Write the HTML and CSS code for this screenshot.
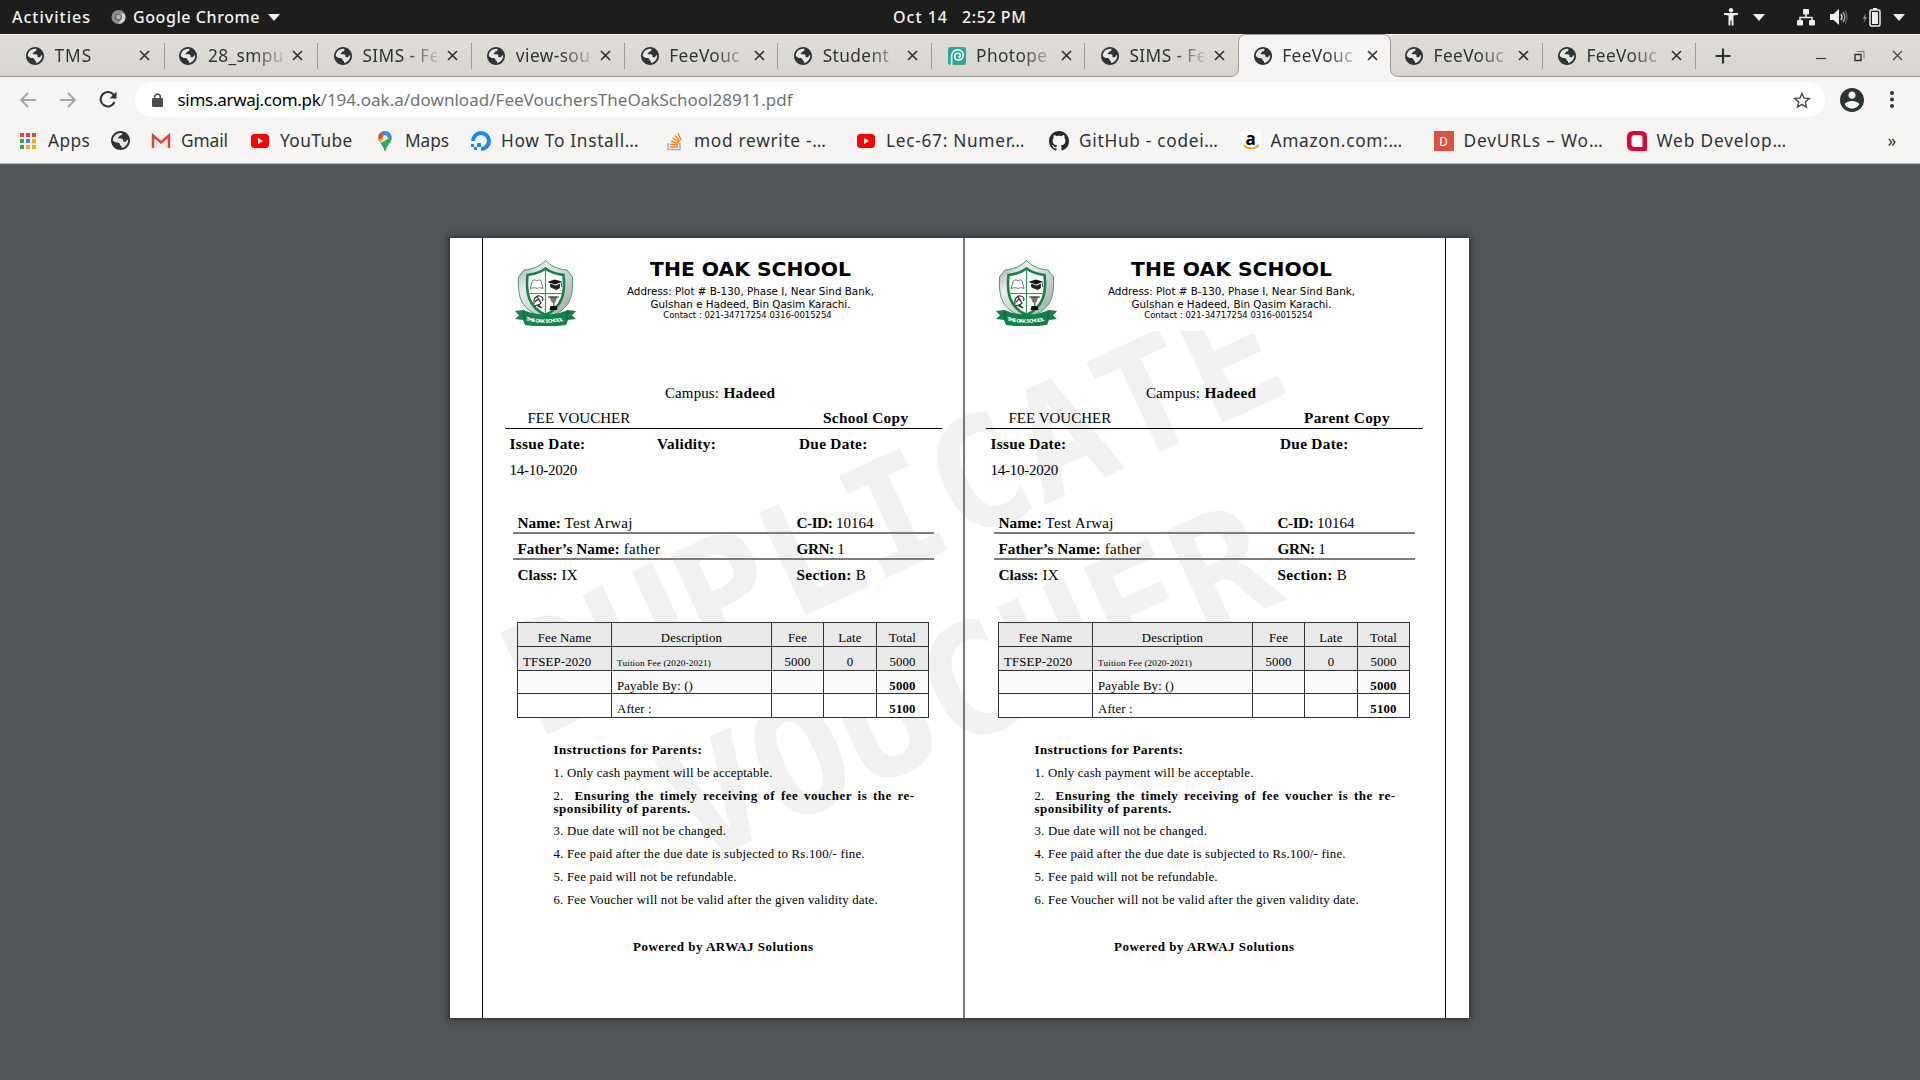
FILE: index.html
```html
<!DOCTYPE html>
<html lang="en">
<head>
<meta charset="utf-8">
<title>FeeVouchersTheOakSchool28911.pdf</title>
<link rel="stylesheet" href="styles.css">
</head>
<body>
<svg class="defs" width="0" height="0">
  <defs>
    <linearGradient id="silver" x1="0" y1="0" x2="1" y2="1">
      <stop offset="0" stop-color="#9da1a0"/><stop offset=".3" stop-color="#ececec"/><stop offset=".6" stop-color="#cdcfcf"/><stop offset="1" stop-color="#9da1a0"/>
    </linearGradient>
  </defs>
  <symbol id="globe" viewBox="2 2 20 20"><path fill="#2e3436" d="M12 2C6.48 2 2 6.480 2 12s4.480 10 10 10 10-4.480 10-10S17.520 2 12 2z"/><path fill="#e9e6e3" d="M13.500 4.100c.4 1.600-.3 2.400-1.700 2.700-.9.200-.7 1.200-1.500 1.500-.8.300-1 .9-.6 1.700h3.200c1.200 0 1.900.8 1.900 1.900v1.500h1.600c1.300-.1 2-.8 2.200-2l1.400-.2c.2 4.200-2.600 7.900-6.900 8.600.4-1.500-.4-1.900-1.100-2.400-.9-.6-.5-1.900-1.500-2.600-1-.7-2.200-.6-3.700-.7L4 12.500C3.600 7.700 7.900 3.300 13.500 4.100z"/><path fill="#2e3436" d="M3 11.500l4.200 3 3 .2c1 .3.700 1.400 1.300 2.100.7.700 1.500.8 1.300 2.200l-.4 2-4-.7-4-3.500z" opacity=".85"/></symbol>
  <symbol id="x" viewBox="0 0 11 11"><path d="M1 1l9 9M10 1l-9 9" stroke="#2e3436" stroke-width="1.700" fill="none"/></symbol>
  <symbol id="tri" viewBox="0 0 12 7"><path d="M0 0h12L6 7z" fill="#f0f0f0"/></symbol>
  <symbol id="youtube" viewBox="0 0 20 20"><rect x="1" y="3" width="18" height="14" rx="3.500" fill="#f00"/><path d="M8 7l5 3-5 3z" fill="#fff"/></symbol>
  <symbol id="crest" viewBox="0 0 61 66">
    <path d="M30.500.5c5 5 12 9 21.500 9.500l5.500 7c1 22-3 33-27 41.500C6.500 50 2.500 39 3.500 17L9 10C18.500 9.500 25.500 5.500 30.500.5z" fill="url(#silver)" stroke="#3d9b6d" stroke-width="1"/>
    <path d="M30.500 8.500c4.500 3.500 10 5.500 18 6.500 2 18-1 32-18 40-17-8-20-22-18-40 8-1 13.500-3 18-6.500z" fill="#fff" stroke="#14834a" stroke-width="2.600"/>
    <path d="M30.500 9v46M12.500 33.500h36" stroke="#2d9a62" stroke-width="1.200"/>
    <path d="M15 28.500l2.500-8c2-1 3.500-.5 4.500.5 1-1 2.500-1.500 4-.5l2 8c-2.500-1-4.500-1-6 0-1.500-1-4.500-1-7 0z" fill="#fff" stroke="#777" stroke-width="1"/>
    <path d="M32.500 22l7-2.500 7.500 2-6.500 3z" fill="#111"/><path d="M35.500 24l5.500 2 3.500-2v4l-3 1.500-6-2.500zM46 22l.7 5" fill="#222" stroke="#222" stroke-width=".8"/>
    <path d="M19 44c-1-5 2-8.500 5.500-8 3 .6 4 2.500 3 5M20 42l3-3 3 4-3 3 4 2-4-3-4 1M22 37l3 4" fill="none" stroke="#333" stroke-width="1.200"/>
    <path d="M34.500 36.500h8l-2 5.500-2 1.500-2-1.500zM38 43h1.500v3H38z" fill="#777"/><path d="M35.500 46h6l1 4-8-.1z" fill="#111"/><path d="M33 37h11" stroke="#333" stroke-width="1"/>
    <path d="M0 51l8-1c14 6 31 6 45 0l8 1-4 4.500 4 3.500-8 1-2 5c-14 2-28 2-41 0l-2-5-8-1 4-3.500z" fill="#14804a"/>
    <path d="M9 50.500v8.500M52 50.500v8.500" stroke="#0a5a32" stroke-width="1"/>
    <path id="ribbonCurve" d="M11 60.500q19.500 4.500 39 0" fill="none"/>
    <text class="ribbon-text"><textPath href="#ribbonCurve" textLength="38">THE OAK SCHOOL</textPath></text>
  </symbol>
</svg>

<header class="topbar">
  <span class="activities">Activities</span>
  <svg class="chrome-icon" viewBox="0 0 16 16"><circle cx="8" cy="8" r="7.500" fill="#8c8c8c"/><path d="M8 .5A7.500 7.500 0 0 1 15.500 8 7.500 7.500 0 0 1 8 15.500L11.500 8 8 4.500h6.500A7.500 7.500 0 0 0 8 .5z" fill="#d0d0d0"/><circle cx="8" cy="8" r="3.600" fill="#555"/><circle cx="8" cy="8" r="2.600" fill="#b5b5b5"/></svg>
  <span class="app-name">Google Chrome</span>
  <svg class="tri" width="12" height="7"><use href="#tri"/></svg>
  <span class="date">Oct 14</span>
  <span class="time">2:52 PM</span>
  <svg class="person" width="14" height="18" viewBox="0 0 14 18" fill="#eee"><circle cx="7" cy="2.200" r="2.200"/><path d="M0 5h14v1.800l-4.500.7v10H7.600v-5H6.400v5H4.500v-10L0 6.800z"/></svg>
  <svg class="tri" width="12" height="7"><use href="#tri"/></svg>
  <svg class="net" width="18" height="17" viewBox="0 0 18 17" fill="#eee"><rect x="6" y="0" width="6" height="5.500" rx="1"/><rect x="0" y="11" width="6" height="5.500" rx="1"/><rect x="12" y="11" width="6" height="5.500" rx="1"/><path d="M9 5v4M3 11V8.500h12V11" fill="none" stroke="#eee" stroke-width="1.500"/></svg>
  <svg class="vol" width="18" height="16" viewBox="0 0 18 16"><path d="M0 5h3.500L9 0v16l-5.500-5H0z" fill="#eee"/><path d="M11 5q2 3 0 6" fill="none" stroke="#ccc" stroke-width="1.500"/><path d="M13 3q3.500 5 0 10" fill="none" stroke="#999" stroke-width="1.500"/><path d="M15.200 1.500q3.500 6.500 0 13" fill="none" stroke="#666" stroke-width="1.200"/></svg>
  <svg class="bat" width="19" height="19" viewBox="0 0 19 19"><path d="M4 5L.8 10.500h2L1.500 15 5 9H3z" fill="#999"/><rect x="8" y="2" width="10" height="16" rx="1.500" fill="none" stroke="#eee" stroke-width="1.500"/><rect x="10" y="4" width="6" height="12" fill="#eee"/><rect x="11" y="0" width="4" height="2" fill="#eee"/></svg>
  <svg class="tri" width="12" height="7"><use href="#tri"/></svg>
</header>

<nav class="tabstrip">
  <div class="tab"><svg class="fav"><use href="#globe"/></svg><span class="label wide">TMS</span><svg class="close"><use href="#x"/></svg></div>
  <div class="tab"><svg class="fav"><use href="#globe"/></svg><span class="label">28_smpu</span><svg class="close"><use href="#x"/></svg></div>
  <div class="tab"><svg class="fav"><use href="#globe"/></svg><span class="label">SIMS - Fe</span><svg class="close"><use href="#x"/></svg></div>
  <div class="tab"><svg class="fav"><use href="#globe"/></svg><span class="label">view-sou</span><svg class="close"><use href="#x"/></svg></div>
  <div class="tab"><svg class="fav"><use href="#globe"/></svg><span class="label">FeeVouc</span><svg class="close"><use href="#x"/></svg></div>
  <div class="tab"><svg class="fav"><use href="#globe"/></svg><span class="label">Student</span><svg class="close"><use href="#x"/></svg></div>
  <div class="tab"><svg class="fav" viewBox="0 0 20 20"><rect width="20" height="20" rx="3" fill="#2ba79a"/><path d="M4 20v-9.500C4 6 7 3 10.800 3S17 6 17 9s-2.500 5.500-5.500 5.500S7.500 12.500 7.500 10.500 9 7 11 7s2.700 1.300 2.700 2.500-1 2-2.200 2" fill="none" stroke="#fff" stroke-width="1.700"/></svg><span class="label">Photope</span><svg class="close"><use href="#x"/></svg></div>
  <div class="tab no-sep"><svg class="fav"><use href="#globe"/></svg><span class="label">SIMS - Fe</span><svg class="close"><use href="#x"/></svg></div>
  <div class="tab active">
    <svg class="shape" viewBox="0 0 172 43"><path d="M0 43v-.5C7 42.500 9.500 40 9.500 33V9.500C9.500 3 12 .5 18 .5h135c6 0 8.500 2.500 8.500 9V33c0 7 2.500 9.500 10 9.500v.5z" fill="#f6f5f4"/><path d="M0 42.500C7 42.500 9.500 40 9.500 33V9.500C9.500 3 12 .5 18 .5h135c6 0 8.500 2.500 8.500 9V33c0 7 2.500 9.500 10 9.500" fill="none" stroke="#9a9996"/></svg>
    <svg class="fav"><use href="#globe"/></svg><span class="label">FeeVouc</span><svg class="close"><use href="#x"/></svg></div>
  <div class="tab"><svg class="fav"><use href="#globe"/></svg><span class="label">FeeVouc</span><svg class="close"><use href="#x"/></svg></div>
  <div class="tab"><svg class="fav"><use href="#globe"/></svg><span class="label">FeeVouc</span><svg class="close"><use href="#x"/></svg></div>
  <svg class="plus" width="16" height="16" viewBox="0 0 16 16"><path d="M8 .5v15M.5 8h15" stroke="#2e3436" stroke-width="2.200"/></svg>
  <svg class="win-min" width="10" height="12" viewBox="0 0 10 12"><path d="M0 8.500h10" stroke="#444" stroke-width="1.300"/></svg>
  <svg class="win-max" width="11" height="12" viewBox="0 0 11 12"><path d="M1 4.500h6v6H1z" fill="none" stroke="#333" stroke-width="1.400"/><path d="M3 1.500h7v7" fill="none" stroke="#777"/></svg>
  <svg class="win-close" width="11" height="11" viewBox="0 0 11 11"><path d="M1 1l9 9M10 1l-9 9" stroke="#444" stroke-width="1.300"/></svg>
</nav>

<div class="toolbar">
  <svg class="nav-back" width="16" height="16" viewBox="0 0 16 16"><path d="M16 8H1.500M8 1L1 8l7 7" fill="none" stroke="#a3a5a4" stroke-width="1.800"/></svg>
  <svg class="nav-fwd" width="16" height="16" viewBox="0 0 16 16"><path d="M0 8h14.500M8 1l7 7-7 7" fill="none" stroke="#a3a5a4" stroke-width="1.800"/></svg>
  <svg class="nav-reload" width="18" height="18" viewBox="0 0 18 18"><path d="M14.800 4.200A7.200 7.200 0 1 0 15.500 11" fill="none" stroke="#2e3436" stroke-width="2.100"/><path d="M17.500.5v7h-7z" fill="#2e3436"/></svg>
  <div class="omnibox">
    <svg width="11" height="14" viewBox="0 0 11 14"><rect y="5" width="11" height="9" rx="1.200" fill="#4a4d4f"/><path d="M2.700 6V3.700a2.800 2.800 0 0 1 5.600 0V6" fill="none" stroke="#4a4d4f" stroke-width="1.500"/></svg>
    <span class="url"><span class="host">sims.arwaj.com.pk</span><span class="path">/194.oak.a/download/FeeVouchersTheOakSchool28911.pdf</span></span>
    <svg class="star" width="18" height="18" viewBox="2 2 20 19"><path fill="#4a4d4f" d="M22 9.240l-7.190-.62L12 2 9.190 8.630 2 9.240l5.460 4.730L5.820 21 12 17.270 18.180 21l-1.630-7.030L22 9.240zM12 15.400l-3.760 2.270 1-4.280-3.320-2.880 4.380-.38L12 6.100l1.710 4.040 4.380.38-3.320 2.880 1 4.280L12 15.400z"/></svg>
  </div>
  <svg class="avatar" width="24" height="24" viewBox="2 2 20 20"><path fill="#2e3436" d="M12 2C6.480 2 2 6.480 2 12s4.480 10 10 10 10-4.480 10-10S17.520 2 12 2zm0 3c1.660 0 3 1.340 3 3s-1.340 3-3 3-3-1.340-3-3 1.340-3 3-3zm0 14.200c-2.500 0-4.710-1.280-6-3.220.03-1.990 4-3.080 6-3.080 1.990 0 5.970 1.090 6 3.080-1.290 1.940-3.500 3.220-6 3.220z"/></svg>
  <svg class="menu" width="4" height="17" viewBox="0 0 4 17" fill="#2e3436"><circle cx="2" cy="2" r="2"/><circle cx="2" cy="8.500" r="2"/><circle cx="2" cy="15" r="2"/></svg>
</div>

<div class="bookmarks">
  <div class="bm mid"><svg viewBox="0 0 20 20"><g fill="#ea4335"><path d="M2 2h4v4H2zM8 2h4v4H8zM14 2h4v4h-4z"/></g><path d="M2 8h4v4H2zM2 14h4v4H2z" fill="#34a853"/><path d="M8 8h4v4H8z" fill="#4285f4"/><path d="M14 8h4v4h-4zM8 14h4v4H8zM14 14h4v4h-4z" fill="#fbab18"/></svg>Apps</div>
  <div class="bm"><svg class="small"><use href="#globe"/></svg></div>
  <div class="bm tight"><svg viewBox="0 0 20 20"><path d="M1 4h18v13H1z" fill="#eee"/><path d="M2 17V4.500l8 7 8-7V17" fill="none" stroke="#db4437" stroke-width="2.400"/><path d="M3 17l5-6M17 17l-5-6" stroke="#ccc" stroke-width=".8"/></svg>Gmail</div>
  <div class="bm mid"><svg><use href="#youtube"/></svg>YouTube</div>
  <div class="bm tight"><svg viewBox="0 0 20 20"><path d="M10 0C6 0 3.300 3 3.300 6.700c0 1.700.6 3 1.700 4.500L10 6z" fill="#ea4335"/><path d="M10 0c3.700 0 6.700 3 6.700 6.700L10 7 6 2z" fill="#4285f4"/><path d="M3.400 6c0 2 .6 3.500 2 5.300l6-6.500L8 4 5 2.500C4 3.500 3.400 5 3.400 6z" fill="#fbbc04"/><path d="M5 2.300L9 5 4.500 9C3 6 3.500 4 5 2.300z" fill="#ea4335"/><path d="M16.500 5.500c.6 3-.8 5.500-2.500 7.500-1.800 2.200-2.500 4-3 6-.2 1.200-1.500 1.200-1.800 0-.6-2.500-1.700-4.300-3.700-7L11 9z" fill="#34a853"/><circle cx="10" cy="6.700" r="2.400" fill="#fff"/></svg>Maps</div>
  <div class="bm"><svg viewBox="0 0 20 20"><path d="M2 10a8 8 0 1 1 8 8" fill="none" stroke="#1a86ff" stroke-width="4"/><path d="M6 12h4v4H6zM3 16h3v3H3zM0 13h3v3H0z" fill="#1a86ff"/></svg>How To Install…</div>
  <div class="bm"><svg viewBox="0 0 20 20"><path d="M4 12v6.500h12V12" fill="none" stroke="#aab0b4" stroke-width="1.500"/><path d="M6 16h8M6.200 13.200l7.800.9M7 10.200l7.400 2.300M8.700 7l6 4M11 4.500l4.500 5.800M14 2.500l3 6.800" stroke="#f48024" stroke-width="1.500"/></svg>mod rewrite -…</div>
  <div class="bm"><svg><use href="#youtube"/></svg>Lec-67: Numer…</div>
  <div class="bm"><svg viewBox="0 0 16 16"><path fill="#24292e" d="M8 0C3.580 0 0 3.580 0 8c0 3.540 2.290 6.530 5.470 7.590.4.070.55-.17.55-.38 0-.19-.01-.82-.01-1.490-2.010.37-2.530-.49-2.690-.94-.09-.23-.48-.94-.82-1.130-.28-.15-.68-.52-.01-.53.63-.01 1.080.58 1.230.82.72 1.210 1.870.87 2.330.66.070-.52.28-.87.51-1.070-1.780-.2-3.640-.89-3.640-3.950 0-.87.31-1.590.82-2.150-.08-.2-.36-1.020.08-2.120 0 0 .67-.21 2.200.82.64-.18 1.320-.27 2-.27s1.360.09 2 .27c1.530-1.040 2.200-.82 2.200-.82.44 1.100.16 1.920.08 2.120.51.56.82 1.270.82 2.150 0 3.070-1.870 3.750-3.650 3.950.29.25.54.73.54 1.480 0 1.070-.01 1.930-.01 2.200 0 .21.15.46.55.38A8.010 8.010 0 0 0 16 8c0-4.420-3.580-8-8-8z"/></svg>GitHub - codei…</div>
  <div class="bm"><svg viewBox="0 0 20 20"><rect width="20" height="20" rx="3" fill="#fff"/><text class="amazon-a" x="10" y="13.500" text-anchor="middle">a</text><path d="M3 15q7 4.500 13 .8" fill="none" stroke="#f90" stroke-width="1.700"/><path d="M14.500 14.500l3-.3-1 3" fill="none" stroke="#f90" stroke-width="1.100"/></svg>Amazon.com:…</div>
  <div class="bm loose"><svg viewBox="0 0 20 20"><rect width="20" height="20" fill="#de5044"/><text class="dev-d" x="10" y="14.700" text-anchor="middle">D</text></svg>DevURLs – Wo…</div>
  <div class="bm loose"><svg viewBox="0 0 20 20"><path d="M6 0h8q6 0 6 6v14H6q-6 0-6-6V6q0-6 6-6z" fill="#e4003a"/><path d="M7.500 4h5q3 0 3 3v9h-8q-3 0-3-3V7q0-3 3-3z" fill="#fff"/></svg>Web Develop…</div>
  <div class="bm more">»</div>
</div>

<main class="viewer">
  <div class="sheet">
    <svg class="watermark" viewBox="0 93 1019 687"><text transform="translate(88 501) rotate(-24.800)">DUPLICATE</text><text transform="translate(246 628) rotate(-24.300)">VOUCHER</text></svg>

    <section class="voucher">
      <div class="head">
        <svg class="crest"><use href="#crest"/></svg>
        <div class="school"><h1>THE OAK SCHOOL</h1><p>Address: Plot # B-130, Phase I, Near Sind Bank,</p><p>Gulshan e Hadeed, Bin Qasim Karachi.</p><p class="contact">Contact : 021-34717254 0316-0015254</p></div>
      </div>
      <p class="campus">Campus: <b>Hadeed</b></p>
      <div class="kind"><span>FEE VOUCHER</span><b>School Copy</b></div>
      <div class="dates"><b>Issue Date:</b><b>Validity:</b><b>Due Date:</b><span class="digits">14-10-2020</span></div>
      <div class="student">
        <div class="line"><span><b>Name:</b> Test Arwaj</span><span class="digits"><b class="id">C-ID:</b> 10164</span></div>
        <div class="line"><span><b>Father’s Name:</b> father</span><span class="digits"><b class="id">GRN:</b> 1</span></div>
        <div class="line"><span><b>Class:</b> IX</span><span><b class="sec">Section:</b> B</span></div>
      </div>
      <table class="fees">
        <colgroup><col class="c1"><col class="c2"><col class="c3"><col class="c4"><col class="c5"></colgroup>
        <tr class="shade"><td class="c">Fee Name</td><td class="c">Description</td><td class="c">Fee</td><td class="c">Late</td><td class="c">Total</td></tr>
        <tr class="shade"><td>TFSEP-2020</td><td class="tiny">Tuition Fee (2020-2021)</td><td class="c">5000</td><td class="c">0</td><td class="c">5000</td></tr>
        <tr class="faint"><td></td><td>Payable By: ()</td><td></td><td></td><td class="c"><b>5000</b></td></tr>
        <tr><td></td><td>After :</td><td></td><td></td><td class="c"><b>5100</b></td></tr>
      </table>
      <div class="notes">
        <p><b>Instructions for Parents:</b></p>
        <p>1. Only cash payment will be acceptable.</p>
        <p><span class="full">2.&nbsp; <b>Ensuring the timely receiving of fee voucher is the re-</b></span><b>sponsibility of parents.</b></p>
        <p>3. Due date will not be changed.</p>
        <p>4. Fee paid after the due date is subjected to Rs.100/- fine.</p>
        <p>5. Fee paid will not be refundable.</p>
        <p>6. Fee Voucher will not be valid after the given validity date.</p>
      </div>
      <p class="powered"><b>Powered by ARWAJ Solutions</b></p>
    </section>

    <section class="voucher second">
      <div class="head">
        <svg class="crest"><use href="#crest"/></svg>
        <div class="school"><h1>THE OAK SCHOOL</h1><p>Address: Plot # B-130, Phase I, Near Sind Bank,</p><p>Gulshan e Hadeed, Bin Qasim Karachi.</p><p class="contact">Contact : 021-34717254 0316-0015254</p></div>
      </div>
      <p class="campus">Campus: <b>Hadeed</b></p>
      <div class="kind"><span>FEE VOUCHER</span><b>Parent Copy</b></div>
      <div class="dates"><b>Issue Date:</b><b></b><b>Due Date:</b><span class="digits">14-10-2020</span></div>
      <div class="student">
        <div class="line"><span><b>Name:</b> Test Arwaj</span><span class="digits"><b class="id">C-ID:</b> 10164</span></div>
        <div class="line"><span><b>Father’s Name:</b> father</span><span class="digits"><b class="id">GRN:</b> 1</span></div>
        <div class="line"><span><b>Class:</b> IX</span><span><b class="sec">Section:</b> B</span></div>
      </div>
      <table class="fees">
        <colgroup><col class="c1"><col class="c2"><col class="c3"><col class="c4"><col class="c5"></colgroup>
        <tr class="shade"><td class="c">Fee Name</td><td class="c">Description</td><td class="c">Fee</td><td class="c">Late</td><td class="c">Total</td></tr>
        <tr class="shade"><td>TFSEP-2020</td><td class="tiny">Tuition Fee (2020-2021)</td><td class="c">5000</td><td class="c">0</td><td class="c">5000</td></tr>
        <tr class="faint"><td></td><td>Payable By: ()</td><td></td><td></td><td class="c"><b>5000</b></td></tr>
        <tr><td></td><td>After :</td><td></td><td></td><td class="c"><b>5100</b></td></tr>
      </table>
      <div class="notes">
        <p><b>Instructions for Parents:</b></p>
        <p>1. Only cash payment will be acceptable.</p>
        <p><span class="full">2.&nbsp; <b>Ensuring the timely receiving of fee voucher is the re-</b></span><b>sponsibility of parents.</b></p>
        <p>3. Due date will not be changed.</p>
        <p>4. Fee paid after the due date is subjected to Rs.100/- fine.</p>
        <p>5. Fee paid will not be refundable.</p>
        <p>6. Fee Voucher will not be valid after the given validity date.</p>
      </div>
      <p class="powered"><b>Powered by ARWAJ Solutions</b></p>
    </section>
    <div class="edge"></div>
  </div>
</main>
</body>
</html>
```
FILE: styles.css
```css
* { box-sizing: border-box; }
body { margin: 0; width: 1920px; height: 1080px; overflow: hidden; background: #525659; font-family: "Noto Sans", sans-serif; color: #2e3436; }
p, h1 { margin: 0; }
svg { display: block; flex: none; }
.defs { position: absolute; }

/* desktop panel */
.topbar { height: 34px; background: #1d1d1d; color: #f2f2f2; font-size: 16px; font-weight: 500; letter-spacing: .58px; white-space: nowrap; display: grid; align-items: center;
  grid-template-columns: 99px 22px 135px 625px 69px 762px 29px 44px 33px 32px 31px 1fr; padding-left: 12px; }
.topbar .activities { letter-spacing: 1px; }
.topbar .date { letter-spacing: 1px; }
.chrome-icon { width: 15px; height: 16px; }

/* tabs */
.tabstrip { height: 43px; display: flex; align-items: center; padding-left: 11.500px; border-top: 1px solid #fbfbfb; border-bottom: 1px solid #9a9996; background: linear-gradient(#e1deda, #d8d5d0); }
.tab { position: relative; flex: none; width: 153.400px; height: 26px; display: flex; align-items: center; padding-left: 14.500px; border-right: 1px solid #9a9a97; }
.tab:nth-child(n+3) { padding-left: 15.700px; }
.tab:nth-child(n+9) { width: 152.900px; padding-left: 15px; }
.tab.active { width: 151.400px; padding-left: 15px; }
.tab.no-sep, .tab.active { border-right-color: transparent; }
.fav { width: 18px; height: 18px; position: relative; }
.label { position: relative; margin-left: 10.500px; width: 75px; overflow: hidden; white-space: nowrap; font-size: 17.300px; line-height: 26px; letter-spacing: .4px; -webkit-mask-image: linear-gradient(90deg, #000 60%, transparent 108%); mask-image: linear-gradient(90deg, #000 60%, transparent 108%); }
.label.wide { letter-spacing: 1px; }
.close { position: relative; width: 11px; height: 11px; margin-left: 9.500px; }
.shape { position: absolute; left: -9.500px; top: -9px; width: 172px; height: 43px; }
.plus { margin-left: 19px; }
.win-min { margin-left: 85px; }
.win-max { margin-left: 28.500px; }
.win-close { margin-left: 27px; }

/* address bar */
.toolbar { height: 45px; background: #f6f5f4; display: flex; align-items: center; padding-left: 19.500px; }
.nav-fwd { margin-left: 24px; }
.nav-reload { margin-left: 23px; }
.omnibox { margin-left: 18px; width: 1690px; height: 35px; border-radius: 18px; background: #fff; display: flex; align-items: center; padding: 0 13.500px 0 17px; }
.url { margin-left: 15px; font-size: 17px; line-height: 24px; white-space: nowrap; }
.host { color: #000; letter-spacing: -.29px; }
.path { color: #6f7375; letter-spacing: .02px; }
.star { margin-left: auto; }
.avatar { margin-left: 15.500px; }
.menu { margin-left: 26px; }

/* bookmarks */
.bookmarks { height: 42px; background: #f6f5f4; border-bottom: 1px solid #b9b7b4; display: grid; align-items: center; padding: 0 0 4px 18px;
  grid-template-columns: 93px 40px 99px 125px 96px 193px 192px 193px 191.500px 193px 193px 261px 1fr; }
.bm { display: flex; align-items: center; gap: 10px; font-size: 17.300px; line-height: 24px; letter-spacing: .7px; white-space: nowrap; }
.bm svg { width: 20px; height: 20px; }
.bm svg.small { width: 19px; height: 19px; }
.bm.mid { letter-spacing: .42px; }
.bm.tight { letter-spacing: -.07px; }
.bm.loose { letter-spacing: .84px; }
.amazon-a { font: bold 17px "Open Sans", sans-serif; fill: #000; }
.dev-d { font: 13px Roboto, sans-serif; fill: #fff; }

/* document */
.viewer { height: 916px; padding: 74px 0 0 450px; background: #525659; }
.sheet { position: relative; width: 1019px; height: 780px; background: #fff; display: grid; grid-template-columns: 481px 482px 1fr; padding-left: 32px; box-shadow: 0 0 6px 2px rgba(0,0,0,.4); font: 15px "Liberation Serif", serif; color: #000; }
.watermark { position: absolute; left: 0; top: 93px; width: 1019px; height: 687px; }
.watermark text { font: bold 154px "DejaVu Sans Mono", monospace; fill: #f1f1f1; }
.voucher { position: relative; border-left: 1px solid #000; white-space: nowrap; height: 780px; letter-spacing: .1px; }
.voucher.second { border-left: 2px solid #777; }
.voucher.second > * { margin-right: 1px; }
.edge { position: relative; border-left: 1px solid #000; }
.head { height: 93px; display: flex; padding-left: 32px; }
.crest { width: 61px; height: 66px; margin-top: 21.500px; }
.second .head { padding-left: 31px; }
.ribbon-text { font: bold 4.800px "DejaVu Sans", sans-serif; fill: #fff; }
.school { width: 345px; margin-left: 2px; padding-top: 19px; text-align: center; font: 10.370px/12.600px "DejaVu Sans", sans-serif; letter-spacing: 0; }
.school h1 { font-size: 20.300px; line-height: 24px; margin-bottom: 4px; }
.school .contact { font-size: 8.470px; line-height: 11px; padding-right: 6px; }
.campus { margin: 52px 0 0 182px; line-height: 20px; }
.second .campus { margin-left: 181px; }
.voucher b { font-size: 15.300px; letter-spacing: .3px; }
.campus b { margin-left: .5px; }
.kind { display: grid; grid-template-columns: 318px 1fr; width: 437px; height: 21px; margin: 5px 0 0 22px; border-bottom: 1px solid #000; line-height: 20px; }
.second .kind { margin-left: 21px; }
.kind span { padding-left: 22.500px; letter-spacing: 0; }
.dates { display: grid; grid-template-columns: 147.500px 142px auto; grid-auto-rows: 20px; row-gap: 6px; margin: 5px 0 0 26.500px; line-height: 20px; }
.second .dates { margin-left: 25.500px; }
.dates .digits { letter-spacing: -.25px; }
.student { width: 421px; margin: 28px 0 0 29.500px; }
.second .student { margin-left: 28.500px; }
.student .line { display: grid; grid-template-columns: 279px 1fr; padding-left: 5px; height: 26px; padding-top: 5px; line-height: 20px; letter-spacing: .3px; border-bottom: 2px solid #7d7d7d; }
.student .line:last-child { border-bottom: 0; }
.student .digits { letter-spacing: 0; }
.student b { letter-spacing: 0; }
.student b.id { letter-spacing: -.5px; }
.student b.sec { letter-spacing: .3px; }
.fees { border-collapse: collapse; table-layout: fixed; width: 411px; margin: 36px 0 0 34px; background: #fff; font-size: 12.800px; letter-spacing: .15px; }
.second .fees { margin-left: 33px; }
.fees .c1 { width: 94px; } .fees .c2 { width: 160px; } .fees .c3 { width: 52px; } .fees .c4 { width: 53px; } .fees .c5 { width: 52px; }
.fees tr { height: 23.500px; }
.fees td { border: 1px solid #333; padding: 8px 0 0 5px; line-height: 14px; vertical-align: top; }
.fees .c { padding-left: 0; text-align: center; }
.fees td:nth-child(4) { border-left-color: #888; }
.fees .tiny { font-size: 9.200px; padding-top: 9px; }
.fees b { font-size: 12.800px; line-height: 1px; letter-spacing: .2px; }
.shade { background: #e9e9e9; }
.faint { background: #fafafa; }
.notes { width: 360.500px; margin: 26.500px 0 0 70.500px; display: flex; flex-direction: column; gap: 9.800px; font-size: 12.800px; line-height: 13px; letter-spacing: .22px; }
.second .notes { margin-left: 69.500px; }
.notes b, .powered b { font-size: 13px; line-height: 1px; letter-spacing: .48px; }
.full { display: block; white-space: normal; text-align-last: justify; width: 361px; }
.powered { margin: 34px 0 0 150px; line-height: 13px; font-size: 12.800px; }
.second .powered { margin-left: 149px; }
```
